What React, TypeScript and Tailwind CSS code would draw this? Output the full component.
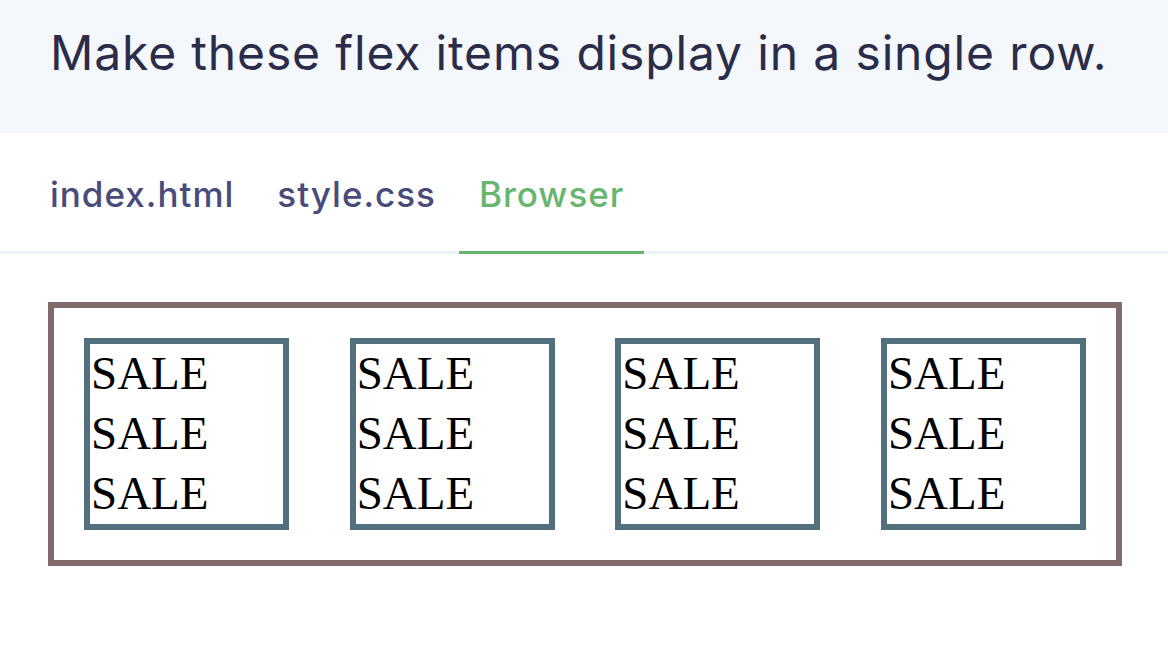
import React from 'react';

const tabs = [
  { label: 'index.html', active: false },
  { label: 'style.css', active: false },
  { label: 'Browser', active: true },
];

const SaleBox: React.FC = () => (
  <div className="w-[205px] border-[6px] border-[#516f7c] bg-white">
    {[0, 1, 2].map(i => (
      <div key={i} className="text-[47px] leading-[60px] text-black pl-[1px] -mt-[1px] mb-[1px]" style={{ fontFamily: '"Liberation Serif", "Times New Roman", serif' }}>
        SALE
      </div>
    ))}
  </div>
);

export default function App() {
  return (
    <div className="w-[1168px] h-[659px] bg-white overflow-hidden" style={{ fontFamily: 'Inter, "Noto Sans", sans-serif' }}>
      {/* task prompt */}
      <div className="h-[133px] bg-[#f4f7fc] pl-[50px] pt-[29px]">
        <h1 className="text-[48px] leading-none font-normal text-[#2b2c49] tracking-[0.85px]">
          Make these flex items display in a single row.
        </h1>
      </div>

      {/* tabs */}
      <div className="h-[121px] flex items-end pl-[30px] gap-[3px] border-b-[3px] border-[#eef1f6]">
        {tabs.map(tab => (
          <div
            key={tab.label}
            className={
              tab.active
                ? 'px-5 h-[77px] -mb-[3px] border-b-[3px] border-[#66b56d] text-[#67b66e] text-[35px] leading-none font-medium tracking-[1px]'
                : 'px-5 h-[77px] -mb-[3px] border-b-[3px] border-transparent text-[#494b7a] text-[35px] leading-none font-medium tracking-[1px]'
            }
          >
            {tab.label}
          </div>
        ))}
      </div>

      {/* browser preview */}
      <div className="pl-[48px] pt-[48px]">
        <div className="w-[1074px] border-[6px] border-[#7f6b6b] p-[30px] flex justify-between">
          <SaleBox />
          <SaleBox />
          <SaleBox />
          <SaleBox />
        </div>
      </div>
    </div>
  );
}
